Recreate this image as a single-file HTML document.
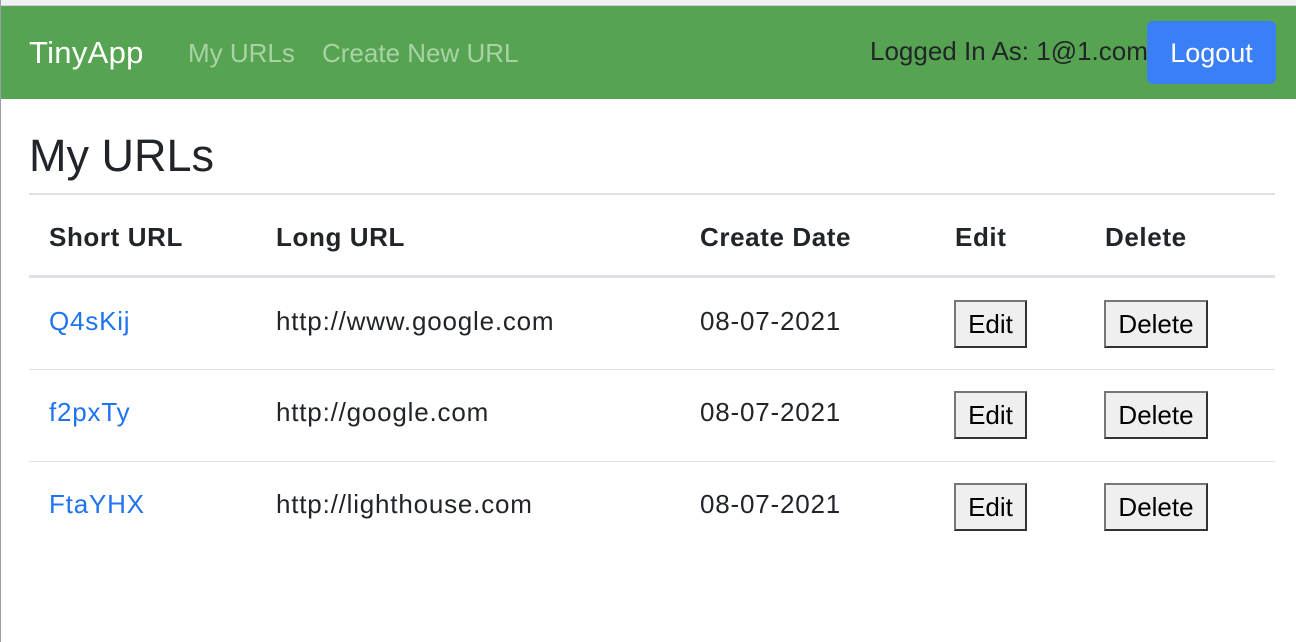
<!DOCTYPE html>
<html><head><style>
*{margin:0;padding:0;box-sizing:border-box}
body{width:1296px;height:642px;background:#fff;font-family:"Liberation Sans",sans-serif;color:#212529;position:relative;overflow:hidden;border-left:1px solid #9aa0a6}
.a{position:absolute;white-space:nowrap}
.nav{position:absolute;left:0;top:6px;width:1296px;height:93px;background:#56a451}
.top{position:absolute;left:0;top:0;width:1296px;height:6px;background:#eef0f3;border-bottom:1px solid #cfd3d8}
.btn{position:absolute;background:#efefef;border:2px solid;border-color:#777 #333 #333 #777;font-size:26px;color:#000;text-align:center;line-height:44px;height:48px}
.line{position:absolute;left:28px;width:1246px;background:#dee2e6}
.th{font-weight:bold;font-size:26px;letter-spacing:0.6px;top:222px}
.td{font-size:26px;letter-spacing:0.8px}
.lk{color:#1f73f0}
</style></head><body>
<div class="top"></div>
<div class="nav"></div>
<div class="a" style="left:28px;top:35px;font-size:31px;letter-spacing:0.3px;color:#fff">TinyApp</div>
<div class="a" style="left:187px;top:38px;font-size:26px;color:#a9d3a6">My URLs</div>
<div class="a" style="left:321px;top:38px;font-size:26px;color:#a9d3a6">Create New URL</div>
<div class="a" style="left:869px;top:36px;font-size:26px;color:#212529">Logged In As: 1@1.com</div>
<div class="a" style="left:1146px;top:21px;width:129px;height:63px;background:#3b7ff6;border-radius:6px;color:#fff;font-size:27px;text-align:center;line-height:65px">Logout</div>
<div class="a" style="left:28px;top:130px;font-size:45px">My URLs</div>
<div class="line" style="top:193px;height:2px"></div>
<div class="a th" style="left:48px">Short URL</div>
<div class="a th" style="left:275px">Long URL</div>
<div class="a th" style="left:699px">Create Date</div>
<div class="a th" style="left:954px">Edit</div>
<div class="a th" style="left:1104px">Delete</div>
<div class="line" style="top:275px;height:3px"></div>

<div class="a td lk" style="left:48px;top:306px">Q4sKij</div>
<div class="a td" style="left:275px;top:306px">http://www.google.com</div>
<div class="a td" style="left:699px;top:306px">08-07-2021</div>
<div class="btn" style="left:953px;top:300px;width:73px">Edit</div>
<div class="btn" style="left:1103px;top:300px;width:104px">Delete</div>
<div class="line" style="top:369px;height:1px"></div>

<div class="a td lk" style="left:48px;top:397px">f2pxTy</div>
<div class="a td" style="left:275px;top:397px">http://google.com</div>
<div class="a td" style="left:699px;top:397px">08-07-2021</div>
<div class="btn" style="left:953px;top:391px;width:73px">Edit</div>
<div class="btn" style="left:1103px;top:391px;width:104px">Delete</div>
<div class="line" style="top:461px;height:1px"></div>

<div class="a td lk" style="left:48px;top:489px">FtaYHX</div>
<div class="a td" style="left:275px;top:489px">http://lighthouse.com</div>
<div class="a td" style="left:699px;top:489px">08-07-2021</div>
<div class="btn" style="left:953px;top:483px;width:73px">Edit</div>
<div class="btn" style="left:1103px;top:483px;width:104px">Delete</div>
</body></html>
